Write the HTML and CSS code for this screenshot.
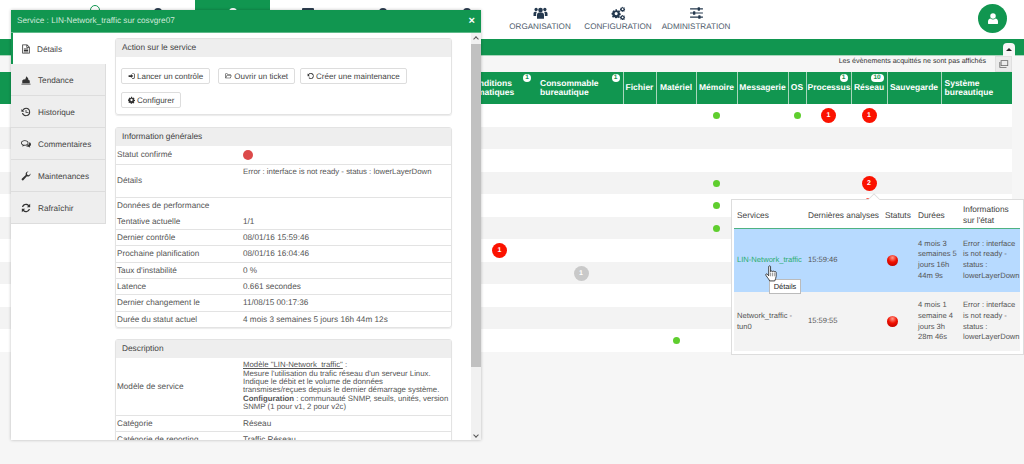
FILE: index.html
```html
<!DOCTYPE html>
<html lang="fr">
<head>
    <meta charset="UTF-8">
    <title>Service : LIN-Network_traffic</title>
    <link rel="stylesheet" href="styles.css">
</head>
<body>
    <svg class="defs" width="0" height="0">
        <symbol id="i-users" viewBox="0 0 24 24"><circle cx="12" cy="7" r="4"/><circle cx="4.5" cy="6" r="2.8"/><circle cx="19.500" cy="6" r="2.800"/><path d="M6 22v-7c0-3 2-4 6-4s6 1 6 4v7z"/><path d="M0 17v-4c0-2 1-3 4.500-3 .5 0 1 .5 1 1-1 1-1 2-1 4v2zM24 17v-4c0-2-1-3-4.500-3-.5 0-1 .5-1 1 1 1 1 2 1 4v2z"/></symbol>
        <symbol id="i-cog" viewBox="0 0 24 24"><path fill-rule="evenodd" d="M10 1h4l.6 3 2.300 1 2.600-1.700 2.800 2.800L20.600 8.700l1 2.300 2.400.6v4l-3 .6-.9 2.200 1.700 2.500-2.800 2.800-2.500-1.700-2.500 1-.6 2h-4l-.5-3-2.300-1-2.500 1.700-2.800-2.800 1.700-2.500-1-2.300-3-.5v-4l3-.6 1-2.300L2.700 6l2.800-2.800L8.100 5l2.300-1zM12 8a4 4 0 1 0 0 8 4 4 0 0 0 0-8z"/></symbol>
        <symbol id="i-cogs" viewBox="0 0 24 24">
            <use href="#i-cog" x="0" y="5" width="16" height="16"/>
            <use href="#i-cog" x="14.500" y="1" width="9" height="9"/>
            <use href="#i-cog" x="14.500" y="15" width="9" height="9"/>
        </symbol>
        <symbol id="i-sliders" viewBox="0 0 24 24"><path d="M1 4h22v2H1zM1 11h22v2H1zM1 18h22v2H1z"/><rect x="14" y="2" width="4" height="6" rx="1"/><rect x="6" y="9" width="4" height="6" rx="1"/><rect x="15" y="16" width="4" height="6" rx="1"/></symbol>
        <symbol id="i-user" viewBox="0 0 24 24"><circle cx="12" cy="7" r="5.500"/><path d="M2 22v-4c0-4 3-6 5-6 1.500 1.300 3 2 5 2s3.500-.7 5-2c2 0 5 2 5 6v4c0 .6-.5 1-1 1H3c-.5 0-1-.4-1-1z"/></symbol>
        <symbol id="i-file" viewBox="0 0 24 24"><path fill-rule="evenodd" d="M3 1h12l6 6v16H3zm2 2v18h14V9h-6V3zm10 .5V7h3.500zM7 11h10v2H7zm0 3.500h10v2H7zM7 18h10v2H7z"/></symbol>
        <symbol id="i-chart" viewBox="0 0 24 24"><path d="M1 21h22v2H1zM3 20v-7l4-3 3 1 3-8 4 5 1 4 3 1v7z"/></symbol>
        <symbol id="i-clock" viewBox="0 0 24 24"><path fill-rule="evenodd" d="M12 2a10 10 0 1 1-9.700 12.500h2.700A7.500 7.500 0 1 0 5.200 9L8 11.500H1V4.500l2.400 2.400A10 10 0 0 1 12 2zm-1 5h2v5h5v2h-7z"/></symbol>
        <symbol id="i-comments" viewBox="0 0 24 24"><path fill-rule="evenodd" d="M9 3c5 0 9 2.700 9 6.500S14 16 9 16l-1.500-.1C6 17 4.500 17.500 2.500 18c.8-1 1.300-2 1.400-3.200C1.500 13.600 0 11.700 0 9.500 0 5.700 4 3 9 3zm0 2C5 5 2 7 2 9.500S5 14 9 14s7-2 7-4.500S13 5 9 5z"/><path d="M20 8c2.500 1 4 2.800 4 5 0 1.900-1 3.400-2.800 4.500.1 1.100.5 2 1.300 3-1.900-.4-3.500-1-4.700-2.100-2.200.1-4.600-.4-6.300-1.800 4 0 8.500-2.600 8.500-8.600z"/></symbol>
        <symbol id="i-wrench" viewBox="0 0 24 24"><path d="M23 6.500a6.500 6.500 0 0 1-8.800 6.100L5.500 22a2.600 2.600 0 0 1-3.600-3.600l9.500-8.700A6.500 6.500 0 0 1 18 1l-4 4 1 4 4 1 4-4z"/></symbol>
        <symbol id="i-refresh" viewBox="0 0 24 24"><path d="M12 2c2.800 0 5.300 1.100 7.100 3L22 2v8h-8l3-3a7 7 0 0 0-11.700 2.500H2.300A10 10 0 0 1 12 2zM2 14h8l-3 3a7 7 0 0 0 11.700-2.500h3A10 10 0 0 1 4.900 19L2 22z"/></symbol>
        <symbol id="i-signin" viewBox="0 0 24 24"><path d="M10 5l8 7-8 7v-4H2V9h8z"/><path d="M14 3h6c2 0 3 1 3 3v12c0 2-1 3-3 3h-6v-2.500h5c1 0 1.500-.5 1.500-1.500V7c0-1-.5-1.500-1.500-1.500h-5z"/></symbol>
        <symbol id="i-folder" viewBox="0 0 24 24"><path fill-rule="evenodd" d="M1 5c0-1 .7-1.500 1.500-1.500H8l2 2.500h8c1 0 1.500.6 1.500 1.500V10H23l-4 10H1zm2 .5V16l3-6.500h11.500V8H9L7 5.500zM7.300 11.500L3.700 18h13.800l3-6.500z"/></symbol>
        <symbol id="i-ccw" viewBox="0 0 24 24"><path fill-rule="evenodd" d="M13 2a10 10 0 1 1 0 20c-3 0-5.700-1.300-7.500-3.400l2-2A7 7 0 1 0 6.500 9.500L10 13H2V3.500l2.500 2.500A10 10 0 0 1 13 2z"/></symbol>
        <symbol id="i-screen" viewBox="0 0 24 24"><path fill-rule="evenodd" d="M4 3h18v14H4zm2 2v10h14V5z"/><path d="M1 7h2v12h15v2H1z"/></symbol>
    </svg>

    <nav class="topnav">
        <div class="nav-item nav-first"><span class="ring"></span></div>
        <div class="nav-item"><span class="stub"></span></div>
        <div class="nav-item active"><span class="stub"></span></div>
        <div class="nav-item"><span class="stub stub-square"></span></div>
        <div class="nav-item"><span class="stub"></span></div>
        <div class="nav-item"><span class="stub stub-pair"></span></div>
        <div class="nav-item nav-label">
            <svg class="nav-icon"><use href="#i-users"/></svg>
            <span>ORGANISATION</span>
        </div>
        <div class="nav-item nav-label">
            <svg class="nav-icon"><use href="#i-cogs"/></svg>
            <span>CONFIGURATION</span>
        </div>
        <div class="nav-item nav-label">
            <svg class="nav-icon"><use href="#i-sliders"/></svg>
            <span>ADMINISTRATION</span>
        </div>
        <div class="avatar"><svg><use href="#i-user"/></svg></div>
    </nav>
    <div class="band">
        <div class="scroll-top"><span class="tri"></span></div>
    </div>

    <div class="notice-row">
        <span>Les évènements acquittés ne sont pas affichés</span>
        <div class="screen-btn"><svg><use href="#i-screen"/></svg></div>
    </div>

    <table class="grid">
        <colgroup>
            <col class="c0"><col class="c1"><col class="c2"><col class="c3"><col class="c4"><col class="c5">
            <col class="c6"><col class="c7"><col class="c8"><col class="c9"><col class="c10"><col class="c11">
        </colgroup>
        <thead>
            <tr>
                <th></th>
                <th class="no-line">Conditions climatiques<span class="count">1</span></th>
                <th class="tight">Consommable bureautique<span class="count">1</span></th>
                <th>Fichier</th>
                <th>Matériel</th>
                <th>Mémoire</th>
                <th>Messagerie</th>
                <th>OS</th>
                <th>Processus<span class="count">1</span></th>
                <th>Réseau<span class="count wide">10</span></th>
                <th>Sauvegarde</th>
                <th>Système bureautique</th>
            </tr>
        </thead>
        <tbody>
            <tr><td></td><td></td><td></td><td></td><td></td><td><i class="dot"></i></td><td></td><td><i class="dot"></i></td><td><b class="alert">1</b></td><td><b class="alert">1</b></td><td></td><td></td></tr>
            <tr><td colspan="12"></td></tr>
            <tr><td colspan="12"></td></tr>
            <tr><td></td><td></td><td></td><td></td><td></td><td><i class="dot"></i></td><td></td><td></td><td></td><td><b class="alert">2</b></td><td></td><td></td></tr>
            <tr><td></td><td></td><td></td><td></td><td></td><td><i class="dot"></i></td><td></td><td></td><td></td><td><b class="alert">1</b></td><td></td><td></td></tr>
            <tr><td></td><td></td><td></td><td></td><td></td><td><i class="dot"></i></td><td></td><td></td><td></td><td></td><td></td><td></td></tr>
            <tr><td></td><td><b class="alert">1</b></td><td></td><td></td><td></td><td></td><td></td><td></td><td></td><td></td><td></td><td></td></tr>
            <tr><td></td><td></td><td><b class="alert muted">1</b></td><td></td><td></td><td></td><td></td><td></td><td></td><td></td><td></td><td></td></tr>
            <tr><td colspan="12"></td></tr>
            <tr><td colspan="12"></td></tr>
            <tr><td></td><td></td><td></td><td></td><td><i class="dot"></i></td><td></td><td></td><td></td><td></td><td></td><td></td><td></td></tr>
        </tbody>
    </table>

    <div class="popup">
        <span class="popup-arrow"></span>
        <table class="popup-table">
            <thead>
                <tr>
                    <th class="p1">Services</th>
                    <th class="p2">Dernières analyses</th>
                    <th class="p3">Statuts</th>
                    <th class="p4">Durées</th>
                    <th class="p5">Informations sur l'état</th>
                </tr>
            </thead>
            <tbody>
                <tr class="hover">
                    <td><a>LIN-Network_traffic</a></td>
                    <td>15:59:46</td>
                    <td><i class="ball"></i></td>
                    <td>4 mois 3 semaines 5 jours 16h 44m 9s</td>
                    <td>Error : interface is not ready - status : lowerLayerDown</td>
                </tr>
                <tr>
                    <td>Network_traffic - tun0</td>
                    <td>15:59:55</td>
                    <td><i class="ball"></i></td>
                    <td>4 mois 1 semaine 4 jours 3h 28m 46s</td>
                    <td>Error : interface is not ready - status : lowerLayerDown</td>
                </tr>
            </tbody>
        </table>
    </div>
    <div class="tooltip">Détails</div>
    <svg class="hand" viewBox="0 0 14 18">
        <path d="M4 1.500c0-1 2-1 2 0V7c0-1 2-1 2 0 0-.8 2-.8 2 .3 0-.7 2-.7 2 .5V12c0 2-1 3-1.500 5H5c-.5-1.500-2-3-4-6-.7-1.200.6-2.200 1.500-1.300L4 11.500z" fill="#fff" stroke="#222" stroke-width=".9"/>
        <path d="M6 8v4M8 8v4M10 8v4" stroke="#444" stroke-width=".6"/>
    </svg>

    <section class="modal">
        <header class="modal-head">
            <span>Service : LIN-Network_traffic sur cosvgre07</span>
            <span class="close">&times;</span>
        </header>
        <div class="modal-body">
            <ul class="tabs">
                <li class="current"><svg class="ti"><use href="#i-file"/></svg>Détails</li>
                <li><svg class="ti"><use href="#i-chart"/></svg>Tendance</li>
                <li><svg class="ti"><use href="#i-clock"/></svg>Historique</li>
                <li><svg class="ti"><use href="#i-comments"/></svg>Commentaires</li>
                <li><svg class="ti"><use href="#i-wrench"/></svg>Maintenances</li>
                <li><svg class="ti"><use href="#i-refresh"/></svg>Rafraîchir</li>
            </ul>
            <div class="content">
                <div class="panel">
                    <div class="panel-head">Action sur le service</div>
                    <div class="actions">
                        <button><svg class="bi"><use href="#i-signin"/></svg>Lancer un contrôle</button>
                        <button><svg class="bi"><use href="#i-folder"/></svg>Ouvrir un ticket</button>
                        <button><svg class="bi"><use href="#i-ccw"/></svg>Créer une maintenance</button>
                        <button><svg class="bi"><use href="#i-cog"/></svg>Configurer</button>
                    </div>
                </div>
                <div class="panel">
                    <div class="panel-head">Information générales</div>
                    <table class="info">
                        <tr class="h18"><td>Statut confirmé</td><td><i class="status"></i></td></tr>
                        <tr class="h33"><td>Détails</td><td class="top">Error : interface is not ready - status : lowerLayerDown</td></tr>
                        <tr class="plain"><td>Données de performance</td><td></td></tr>
                        <tr><td>Tentative actuelle</td><td>1/1</td></tr>
                        <tr><td>Dernier contrôle</td><td>08/01/16 15:59:46</td></tr>
                        <tr class="h17"><td>Prochaine planification</td><td>08/01/16 16:04:46</td></tr>
                        <tr><td>Taux d'instabilité</td><td>0 %</td></tr>
                        <tr><td>Latence</td><td>0.661 secondes</td></tr>
                        <tr class="h17"><td>Dernier changement le</td><td>11/08/15 00:17:36</td></tr>
                        <tr><td>Durée du statut actuel</td><td>4 mois 3 semaines 5 jours 16h 44m 12s</td></tr>
                    </table>
                </div>
                <div class="panel">
                    <div class="panel-head">Description</div>
                    <table class="info">
                        <tr class="h57">
                            <td>Modèle de service</td>
                            <td class="desc"><u>Modèle "LIN-Network_traffic"</u> :<br>Mesure l'utilisation du trafic réseau d'un serveur Linux.<br>Indique le débit et le volume de données<br>transmises/reçues depuis le dernier démarrage système.<br><b>Configuration</b> : communauté SNMP, seuils, unités, version<br>SNMP (1 pour v1, 2 pour v2c)</td>
                        </tr>
                        <tr><td>Catégorie</td><td>Réseau</td></tr>
                        <tr><td>Catégorie de reporting</td><td>Traffic Réseau</td></tr>
                    </table>
                </div>
            </div>
            <div class="scrollbar">
                <span class="arrow up"></span>
                <span class="thumb"></span>
                <span class="arrow down"></span>
            </div>
        </div>
    </section>
</body>
</html>
```

FILE: styles.css
```css
:root {
    --green: #119650;
    --text: #555;
    --line: #ddd;
}

* {
    margin: 0;
    padding: 0;
    box-sizing: border-box;
}

html, body {
    height: 464px;
    overflow: hidden;
}

body {
    background-color: #f6f6f6;
    color: var(--text);
    font-family: "Liberation Sans", Arial, sans-serif;
    font-size: 8.2px;
    text-rendering: geometricPrecision;
}

.defs {
    position: absolute;
}

/* top navigation */
.topnav {
    display: flex;
    height: 39px;
    background-color: #fff;
    position: relative;
}

.nav-item {
    width: 75px;
    display: flex;
    flex-direction: column;
    align-items: center;
    padding-top: 5px;
    flex-shrink: 0;
}

.nav-first {
    width: 120px;
}

.ring {
    width: 10px;
    height: 10px;
    border: 1.500px solid var(--green);
    border-radius: 50%;
    margin-left: 70px;
}

.nav-item.active {
    background-color: var(--green);
}

.stub {
    width: 8px;
    height: 10px;
    margin-top: 3px;
    border-radius: 4px 4px 0 0;
    background-color: #2c3e50;
}

.active .stub {
    background-color: #fff;
}

.stub-square {
    border-radius: 1px;
    width: 12px;
}

.stub-pair {
    margin-left: 18px;
}

.nav-label {
    color: #4e5b6b;
    font-size: 8.100px;
    white-space: nowrap;
    gap: 2px;
    width: 78px;
}

.nav-label:nth-child(7) {
    margin-left: 6px;
}

.nav-icon {
    width: 15px;
    height: 14px;
    margin-top: 1px;
    fill: #24384e;
}

.avatar {
    position: absolute;
    left: 978px;
    top: 4px;
    width: 29px;
    height: 29px;
    border-radius: 50%;
    background-color: var(--green);
    display: flex;
    align-items: center;
    justify-content: center;
}

.avatar svg {
    width: 12px;
    height: 13px;
    fill: #fff;
}

.band {
    height: 17px;
    background-color: var(--green);
    display: flex;
    justify-content: flex-end;
    padding-right: 9px;
    border-bottom: 1px solid #a9d6bc;
}

.scroll-top {
    width: 12px;
    height: 13px;
    margin-top: 4px;
    background-color: #f6f6f6;
    border-radius: 4px 4px 0 0;
    display: flex;
    align-items: center;
    justify-content: center;
}

.tri {
    border: 3px solid transparent;
    border-bottom: 3px solid #222;
    border-top: 0;
}

.notice-row {
    height: 16px;
    display: flex;
    justify-content: flex-end;
    align-items: flex-start;
    padding-right: 12px;
    color: #333;
    font-size: 7.100px;
    gap: 9px;
}

.notice-row span {
    padding-top: 1px;
}

.screen-btn {
    width: 17px;
    height: 16px;
    background-color: #ebebeb;
    border: 1px solid #e0e0e0;
    display: flex;
    align-items: center;
    justify-content: center;
}

.screen-btn svg {
    width: 10px;
    height: 10px;
    fill: #666;
}

/* main grid */
.grid {
    table-layout: fixed;
    border-collapse: collapse;
    width: 1012px;
}

.c0 { width: 460px; }
.c1 { width: 79px; }
.c2 { width: 84px; }
.c3 { width: 33px; }
.c4 { width: 40px; }
.c5 { width: 41px; }
.c6 { width: 51px; }
.c7 { width: 18px; }
.c8 { width: 45px; }
.c9 { width: 36px; }
.c10 { width: 54px; }
.c11 { width: 71px; }

.grid th {
    position: relative;
    height: 32px;
    background-color: var(--green);
    color: #fff;
    font-size: 8.500px;
    font-weight: bold;
    line-height: 9.500px;
    text-align: center;
    border-right: 1px solid #a9d6bc;
    padding: 0 1px;
}

.grid th:last-child {
    text-align: left;
    padding-left: 3px;
    border-right: 0;
}

.grid .no-line {
    border-right: 0;
    text-align: left;
    padding-left: 7px;
    padding-right: 12px;
}

.grid .tight {
    text-align: left;
    padding-left: 1px;
    padding-right: 20px;
}

.count {
    position: absolute;
    top: 2px;
    right: 3px;
    width: 8px;
    height: 8px;
    border-radius: 50%;
    background-color: #fff;
    color: var(--green);
    font-size: 6.500px;
    line-height: 8px;
    text-align: center;
}

.no-line .count {
    right: 8px;
}

.count.wide {
    width: 13px;
    border-radius: 4px;
}

.grid tbody tr {
    background-color: #fff;
    height: 23px;
}

.grid tbody tr:nth-child(even) {
    background-color: #f3f3f3;
    height: 22px;
}

.grid td {
    text-align: center;
    vertical-align: middle;
    line-height: 0;
}

.dot {
    display: inline-block;
    width: 7px;
    height: 7px;
    border-radius: 50%;
    background-color: #5fce2e;
}

.alert {
    display: inline-block;
    width: 15px;
    height: 15px;
    border-radius: 50%;
    background-color: #fb1200;
    color: #fff;
    font-size: 7px;
    line-height: 15px;
}

.alert.muted {
    background-color: #c9c9c9;
}

/* network popup */
.popup {
    position: absolute;
    left: 731px;
    top: 199px;
    width: 293px;
    height: 156px;
    background-color: #fff;
    border: 1px solid #ddd;
    padding: 2px 3px 3px 2px;
}

.popup-arrow {
    position: absolute;
    left: 137px;
    top: -6px;
    width: 10px;
    height: 10px;
    background-color: #fff;
    border-left: 1px solid #ddd;
    border-top: 1px solid #ddd;
    transform: rotate(45deg) scale(.8);
}

.popup-table {
    position: relative;
    table-layout: fixed;
    border-collapse: collapse;
    width: 286px;
    height: 149px;
}

.p1 { width: 71px; }
.p2 { width: 77px; white-space: nowrap; }
.p3 { width: 33px; }
.p4 { width: 45px; }
.p5 { width: 60px; }

.popup-table th {
    height: 26px;
    font-weight: normal;
    font-size: 8.300px;
    line-height: 11px;
    color: #444;
    text-align: left;
    padding: 1px 0 0 3px;
    border-bottom: 1px solid #4eb282;
}

.popup-table td {
    background-color: #f3f3f3;
    font-size: 7.600px;
    line-height: 10.800px;
    padding: 0 0 0 3px;
    vertical-align: middle;
}

.popup-table .hover td {
    background-color: #b7daff;
    height: 64px;
}

.popup-table a {
    color: #2bad70;
}

.ball {
    display: block;
    width: 11px;
    height: 11px;
    margin-left: 2px;
    border-radius: 50%;
    background: radial-gradient(circle at 50% 25%, #ff9a8a 0, #f01000 45%, #b00000 100%);
}

.tooltip {
    position: absolute;
    left: 769px;
    top: 279px;
    width: 32px;
    height: 15px;
    background-color: #fff;
    border: 1px solid #bbb;
    color: #222;
    font-size: 7.400px;
    line-height: 13px;
    text-align: center;
}

.hand {
    position: absolute;
    left: 765px;
    top: 265px;
    width: 13px;
    height: 17px;
}

/* service modal */
.modal {
    position: absolute;
    left: 11px;
    top: 10px;
    width: 470px;
    height: 430px;
    background-color: #fff;
    display: flex;
    flex-direction: column;
    box-shadow: 0 0 3px rgba(0, 0, 0, .25);
}

.modal-head {
    height: 23px;
    flex-shrink: 0;
    background-color: var(--green);
    border-bottom: 1px solid #5fb98a;
    color: #cfe9da;
    font-size: 8.200px;
    line-height: 22px;
    padding: 0 6px;
    display: flex;
    justify-content: space-between;
}

.close {
    color: #fff;
    font-weight: bold;
    font-size: 11px;
}

.modal-body {
    flex: 1;
    display: flex;
    min-height: 0;
}

.tabs {
    width: 95px;
    flex-shrink: 0;
    list-style: none;
    font-size: 8.200px;
    color: #444;
}

.tabs li {
    height: 32px;
    display: flex;
    align-items: center;
    gap: 7px;
    padding: 1px 0 0 10px;
    background-color: #eee;
    border-bottom: 1px solid #ddd;
    border-right: 1px solid #ddd;
}

.tabs li.current {
    height: 31px;
    background-color: #fff;
    border: 0;
    border-left: 2px solid var(--green);
    padding-left: 8px;
    gap: 6px;
}

.ti {
    width: 10px;
    height: 10px;
    fill: #333;
    flex-shrink: 0;
}

.content {
    flex: 1;
    overflow: hidden;
    padding: 5px 19px 0 9px;
    min-width: 0;
}

.panel {
    border: 1px solid #e3e3e3;
    border-radius: 3px;
    box-shadow: 0 1px 1px rgba(0, 0, 0, .08);
    margin-bottom: 11px;
}

.panel:first-child {
    margin-bottom: 12px;
}

.panel-head {
    height: 18px;
    background-color: #eee;
    color: #444;
    font-size: 8.300px;
    line-height: 17px;
    padding-left: 6px;
}

.actions {
    display: flex;
    flex-wrap: wrap;
    gap: 8px 5px;
    padding: 11px 5px 6px;
}

.actions button {
    height: 16px;
    padding: 0 6px;
    background-color: #fff;
    border: 1px solid #ddd;
    border-radius: 2px;
    color: #444;
    font-family: inherit;
    font-size: 8px;
    text-rendering: geometricPrecision;
    display: flex;
    align-items: center;
    gap: 2px;
}

.actions button:first-child {
    margin-right: 3px;
}

.bi {
    width: 7px;
    height: 8px;
    fill: #333;
}

.info {
    width: 100%;
    border-collapse: collapse;
    table-layout: fixed;
}

.info td {
    height: 16px;
    padding: 0 0 0 1px;
    border-top: 1px solid #e3e3e3;
    vertical-align: middle;
}

.info td:first-child {
    width: 126px;
}

.info tr:first-child td {
    border-top: 0;
}

.info .plain + tr td {
    border-top: 0;
    padding-top: 2px;
}

.info .h17 td {
    height: 17px;
}

.info .h18 td {
    height: 18px;
}

.info .h33 td {
    height: 33px;
}

.info .h57 td {
    height: 57px;
}

.info .top {
    vertical-align: top;
    padding-top: 2px;
    font-size: 7.800px;
}

.info .desc {
    font-size: 7.800px;
    line-height: 8.300px;
    white-space: nowrap;
}

.status {
    display: block;
    width: 10px;
    height: 10px;
    border-radius: 50%;
    background-color: #dc4a4a;
}

.scrollbar {
    width: 10px;
    flex-shrink: 0;
    display: flex;
    flex-direction: column;
    align-items: center;
    background-color: #f1f1f1;
}

.arrow {
    height: 11px;
    width: 10px;
    flex-shrink: 0;
    position: relative;
}

.arrow::after {
    content: "";
    position: absolute;
    left: 3px;
    top: 4px;
    width: 3px;
    height: 3px;
    border-left: 1px solid #555;
    border-top: 1px solid #555;
    transform: rotate(45deg);
}

.arrow.down::after {
    transform: rotate(225deg);
}

.thumb {
    width: 10px;
    height: 323px;
    background-color: #c1c1c1;
}

.arrow.down {
    margin-top: auto;
}
```
